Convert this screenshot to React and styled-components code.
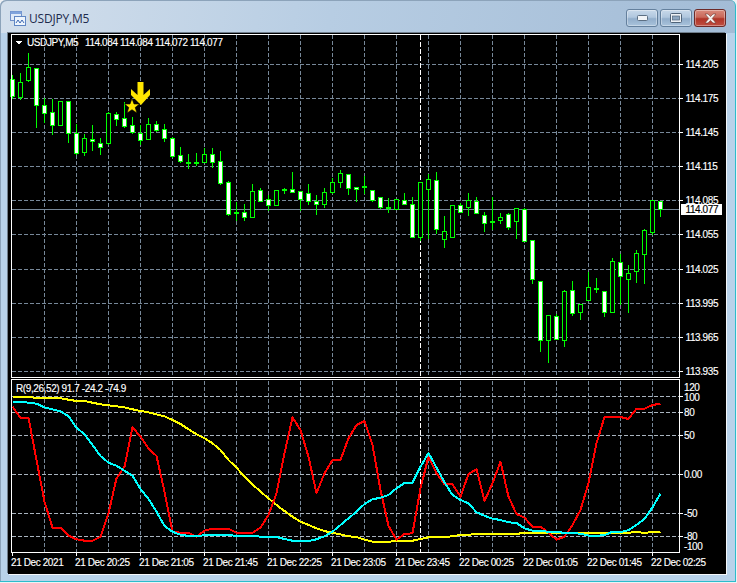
import React from 'react';
import styled, { createGlobalStyle } from 'styled-components';

const Global = createGlobalStyle`
  html, body { margin: 0; padding: 0; background: #eef1f4; }
  #root { width: 737px; height: 583px; overflow: hidden; }
`;

const Window = styled.div`
  box-sizing: border-box;
  width: 736px;
  height: 582px;
  display: flex;
  flex-direction: column;
  padding: 0 8px 6px 8px;
  border-right: 1.5px solid #2cbccb;
  border-bottom: 1.5px solid #2cbccb;
  border-radius: 6px 6px 0 0;
  background:
    linear-gradient(100deg, #d3dfec 0%, #b7cde3 45%, #a3bcd6 100%) top / 100% 33px no-repeat,
    #b8d2ea;
  box-shadow: inset 1px 1px 0 #8ca3ba;
`;

const TitleBar = styled.header`
  height: 33px;
  flex: none;
  display: flex;
  align-items: flex-start;
`;

const TitleIcon = styled.svg`
  width: 16px;
  height: 16px;
  margin: 11px 0 0 2px;
  flex: none;
`;

const TitleText = styled.span`
  margin: 10px 0 0 3px;
  font: 12px/18px "Open Sans", "Liberation Sans", sans-serif;
  letter-spacing: -0.2px;
  color: #1d2b4d;
`;

const Controls = styled.div`
  margin: 9px 1px 0 auto;
  display: flex;
  gap: 2px;
`;

const CtrlButton = styled.button`
  box-sizing: border-box;
  width: 32px;
  height: 18px;
  padding: 0;
  display: flex;
  align-items: center;
  justify-content: center;
  border: 1px solid ${p => (p.$close ? '#6d2a28' : '#64809d')};
  border-radius: 3px;
  box-shadow: inset 0 0 0 1px rgba(255,255,255,0.35);
  background: ${p =>
    p.$close
      ? 'linear-gradient(180deg, #d98a7c 0%, #c9685a 45%, #b03427 55%, #c04f42 100%)'
      : 'linear-gradient(180deg, #c8d9ea 0%, #b0c7de 45%, #92aecb 55%, #a9c3dc 100%)'};
`;

const Client = styled.main`
  flex: none;
  width: 718px;
  height: 541px;
  display: block;
  background: #000;
  box-shadow: -1px -1px 0 #6f7d8b, 1px 1px 0 #f4f7fa;
`;

const ChartSvg = styled.svg`
  display: block;
  shape-rendering: crispEdges;
`;

const Label = styled.text`
  font-family: "Liberation Sans", Arial, sans-serif;
  font-size: 10px;
  fill: ${p => p.$fill || '#ffffff'};
  stroke: ${p => p.$fill || '#ffffff'};
  stroke-width: 0.15px;
  letter-spacing: -0.4px;
  shape-rendering: auto;
`;

const GREEN = '#00ff00';
const GRID = '#778899';
const x = i => 12 + 8 * i;

/* wick top, body top, body bottom, wick bottom, kind: 1 filled, 0 hollow, 2 doji */
const C = (hi, t, b, lo, f = 1) => ({ hi, t, b, lo, f });
const candles = [
  C(75,79,96,98),C(73,82,97,99,0),C(53,67,80,81,0),C(68,68,105,127),C(98,105,113,122),C(99,112,125,134),
  C(101,101,125,125,0),C(101,101,133,142),C(124,133,153,154),C(134,138,152,155,0),C(125,139,141,150),C(138,143,147,154),
  C(112,113,143,144,0),C(112,114,119,125),C(102,118,126,127),C(117,125,132,133),C(125,133,140,144),C(118,124,139,139,0),
  C(121,124,130,131),C(124,129,138,141),C(137,138,156,157),C(147,155,161,162),C(154,162,163,168,2),C(153,162,163,165,2),
  C(148,154,162,162,0),C(148,154,162,167),C(151,161,183,184),C(181,182,214,215),C(202,212,213,220,2),C(204,212,217,220),
  C(184,191,217,217,0),C(188,190,201,201),C(195,199,205,210),C(190,190,205,205,0),C(188,189,190,193,2),C(172,189,192,192),
  C(191,191,199,210),C(184,193,201,204),C(195,201,204,214),C(188,192,204,207,0),C(178,182,192,193,0),C(170,173,182,187,0),
  C(174,174,188,194),C(187,187,189,201),C(176,186,187,193,2),C(190,190,200,201),C(197,197,207,208),C(198,207,208,212,2),
  C(199,199,209,209,0),C(193,200,204,204),C(197,204,237,237),C(182,182,237,240,0),C(174,179,189,238,0),C(172,180,229,233),
  C(216,231,239,247,0),C(205,205,237,237,0),C(203,205,212,212),C(193,200,207,215,0),C(197,201,213,213),C(212,215,223,231),
  C(197,221,222,229,2),C(213,217,220,223,0),C(213,214,227,229),C(208,208,221,238,0),C(208,209,241,241),C(240,240,279,283),
  C(281,281,340,351),C(315,315,340,362,0),C(314,316,339,339),C(290,291,340,346,0),C(281,290,313,315),C(304,304,312,319,0),
  C(272,287,300,300,0),C(278,288,289,292,2),C(291,291,312,316),C(258,261,312,312,0),C(254,262,276,304),C(265,273,279,312,0),
  C(250,253,271,282,0),C(229,230,254,283,0),C(200,200,232,234,0),C(201,201,209,216),
];

const redZ = [95,128,128,255,380,458,458,482,493,497,497,485,415,310,275,157,185,220,243,350,470,473,473,485,467,461,461,461,473,473,
  473,458,420,355,235,127,165,245,355,295,255,255,190,150,138,210,345,453,494,477,475,340,245,295,328,328,365,297,283,378,325,
  260,365,417,428,455,455,473,494,485,450,405,325,205,126,126,126,132,101,101,90,86];
const cyanZ = [80,80,83,86,97,103,109,124,158,178,210,243,263,272,287,302,342,372,410,453,470,479,483,483,481,480,480,480,483,483,
  482,485,486,486,492,497,498,498,493,484,470,450,430,410,387,373,368,360,340,324,323,275,234,278,322,360,375,385,412,422,431,
  435,442,444,460,467,468,470,470,474,474,476,482,482,481,470,472,465,450,432,397,356];
const yellowZ = [66,66,67,68,68,69,70,74,78,78,83,88,91,94,97,103,108,112,118,124,135,147,163,178,190,205,225,255,278,305,
  328,350,370,390,408,425,440,450,460,468,474,478,484,486,494,500,500,500,498,498,497,492,487,486,486,484,480,479,477,477,477,
  477,477,477,473,473,473,473,473,473,473,473,473,473,473,473,473,473,471,474,471,470];

const pts = z => z.map((v, i) => `${x(i) + 0.5},${(375 + v / 3).toFixed(1)}`).join(' ');

const priceTicks = [
  ['114.205', 64], ['114.175', 98], ['114.145', 132], ['114.115', 166], ['114.085', 200],
  ['114.055', 234], ['114.025', 269], ['113.995', 303], ['113.965', 337], ['113.935', 371],
];
const indTicks = [[100, 396], [80, 412], [50, 435], [0, 474], [-50, 513], [-80, 536]];
const indLabels = [['120', 387], ['100', 397], ['80', 412], ['50', 435], ['0.00', 474], ['-50', 513], ['-80', 536], ['-100', 546]];
const timeLabels = [
  ['21 Dec 2021', 12], ['21 Dec 20:25', 76], ['21 Dec 21:05', 140], ['21 Dec 21:45', 204], ['21 Dec 22:25', 268],
  ['21 Dec 23:05', 332], ['21 Dec 23:45', 396], ['22 Dec 00:25', 460], ['22 Dec 01:05', 524], ['22 Dec 01:45', 588], ['22 Dec 02:25', 652],
];
const gridX = Array.from({ length: 20 }, (_, k) => 44 + 32 * k);

const Candle = ({ c, i }) => {
  const cx = x(i);
  return (
    <g>
      <rect x={cx} y={c.hi} width={1} height={c.lo - c.hi + 1} fill={GREEN} />
      {c.f === 2 ? (
        <rect x={cx - 2} y={c.t} width={5} height={2} fill={GREEN} />
      ) : (
        <>
          <rect x={cx - 2} y={c.t} width={5} height={c.b - c.t + 1} fill={GREEN} />
          <rect x={cx - 1} y={c.t + 1} width={3} height={Math.max(c.b - c.t - 1, 0)} fill={c.f ? '#fff' : '#000'} />
        </>
      )}
    </g>
  );
};

const Chart = () => (
  <ChartSvg width={718} height={541} viewBox="8 33 718 541">
    <g stroke={GRID} strokeWidth={1} strokeDasharray="4 2" fill="none">
      {gridX.map(g => <line key={g} x1={g + 0.5} y1={35} x2={g + 0.5} y2={377} />)}
      {gridX.map(g => <line key={g} x1={g + 0.5} y1={381} x2={g + 0.5} y2={552} />)}
      {priceTicks.map(([, y]) => <line key={y} x1={12} y1={y + 0.5} x2={679} y2={y + 0.5} />)}
    </g>
    <g stroke="#a9b4bf" strokeWidth={1} strokeDasharray="4 2" fill="none">
      {indTicks.map(([v, y]) => <line key={v} x1={12} y1={y + 0.5} x2={679} y2={y + 0.5} />)}
    </g>
    <g stroke="#fff" strokeWidth={1} strokeDasharray="5 2" fill="none">
      <line x1={420.5} y1={35} x2={420.5} y2={377} />
      <line x1={420.5} y1={381} x2={420.5} y2={552} />
    </g>
    <rect x={12} y={209} width={667} height={1} fill={GRID} />
    {candles.map((c, i) => <Candle key={i} c={c} i={i} />)}
    <polygon shapeRendering="auto" fill="#ffe600"
      points="137.5,82 143.5,82 143.5,95 150,89 150,95 141,105 131,95 131,89 137.5,95" />
    <polygon shapeRendering="auto" fill="#ffe600" stroke="#000" strokeWidth="0.6"
      points="132,98.5 134,104 139.5,104 135.2,107.5 137,113 132,109.7 127,113 128.8,107.5 124.5,104 130,104" />
    <g stroke="#fff" strokeWidth={1} fill="none">
      <rect x={11.5} y={34.5} width={668} height={343} />
      <rect x={11.5} y={379.5} width={668} height={173} />
    </g>
    {priceTicks.map(([t, y]) => (
      <g key={t}>
        <rect x={680} y={y} width={3} height={1} fill="#fff" />
        <Label x={685.5} y={y + 4}>{t}</Label>
      </g>
    ))}
    <rect x={681} y={204} width={41} height={11} fill="#fff" />
    <Label x={685.5} y={213} $fill="#000">114.077</Label>
    <g fill="none" strokeWidth={2} strokeLinejoin="round">
      <polyline points={pts(yellowZ)} stroke="#ffff00" />
      <polyline points={pts(redZ)} stroke="#ff0000" />
      <polyline points={pts(cyanZ)} stroke="#00ffff" />
    </g>
    {indTicks.map(([v, y]) => <rect key={v} x={680} y={y} width={3} height={1} fill="#fff" />)}
    {indLabels.map(([t, y]) => <Label key={t} x={684} y={y + 4}>{t}</Label>)}
    {timeLabels.map(([t, tx]) => (
      <g key={t}>
        <rect x={tx} y={553} width={1} height={3} fill="#fff" />
        <Label x={tx - 1} y={566}>{t}</Label>
      </g>
    ))}
    <polygon points="15,41 22,41 18.5,44.5" fill="#fff" />
    <Label x={27} y={46}>USDJPY,M5</Label>
    <Label x={85} y={46}>114.084 114.084 114.072 114.077</Label>
    <Label x={16} y={392}>R(9,26,52) 91.7 -24.2 -74.9</Label>
  </ChartSvg>
);

export default function App() {
  return (
    <>
      <Global />
      <Window>
        <TitleBar>
          <TitleIcon viewBox="0 0 16 16">
            <rect x="0.5" y="0.5" width="11" height="9" fill="#dfeaf8" stroke="#6f8fc8" />
            <rect x="0.5" y="0.5" width="11" height="2.5" fill="#7fa3dc" />
            <rect x="4.5" y="5.5" width="11" height="9" fill="#eef5fd" stroke="#5f86c4" />
            <path d="M6 12 L8 9 L10 12 L12 9 L14 12" fill="none" stroke="#3d69b3" strokeWidth="1" />
          </TitleIcon>
          <TitleText>USDJPY,M5</TitleText>
          <Controls>
            <CtrlButton aria-label="Minimize">
              <svg width="11" height="6" viewBox="0 0 11 6">
                <rect x="0.5" y="0.5" width="10" height="5" rx="1" fill="#f1f4f7" stroke="#5c6f83" />
              </svg>
            </CtrlButton>
            <CtrlButton aria-label="Maximize">
              <svg width="12" height="10" viewBox="0 0 12 10">
                <rect x="0.5" y="0.5" width="11" height="9" rx="1" fill="#eef2f6" stroke="#4f6378" />
                <rect x="2.5" y="3" width="7" height="4" fill="#8da6c0" stroke="#4f6378" strokeWidth="0.7" />
              </svg>
            </CtrlButton>
            <CtrlButton $close aria-label="Close">
              <svg width="13" height="11" viewBox="0 0 13 11">
                <path d="M1 1 H4 L6.5 3.6 L9 1 H12 L8.2 5.5 L12 10 H9 L6.5 7.4 L4 10 H1 L4.8 5.5 Z"
                  fill="#f6f3f1" stroke="#6e3a33" strokeWidth="0.6" />
              </svg>
            </CtrlButton>
          </Controls>
        </TitleBar>
        <Client>
          <Chart />
        </Client>
      </Window>
    </>
  );
}
